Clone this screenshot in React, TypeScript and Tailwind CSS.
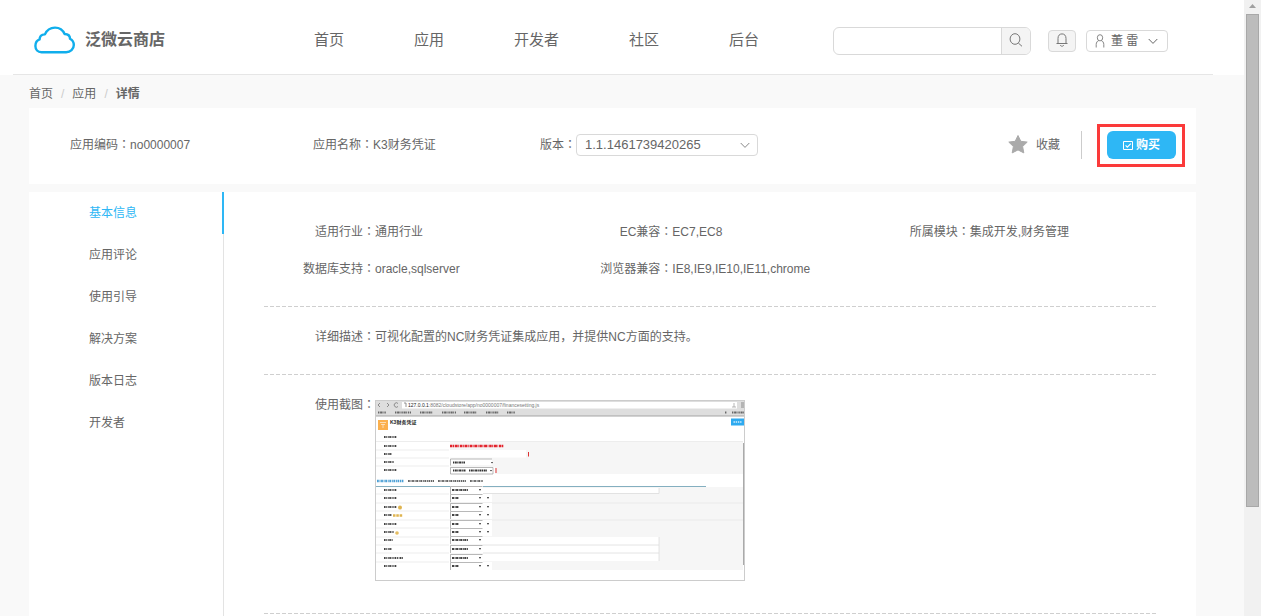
import type { ReactNode } from "react";

const navItems = ["首页", "应用", "开发者", "社区", "后台"];
const sideItems = ["基本信息", "应用评论", "使用引导", "解决方案", "版本日志", "开发者"];

function Chevron() {
  return (
    <svg width="10" height="7" viewBox="0 0 10 7" fill="none" stroke="currentColor" aria-hidden="true">
      <path d="M0.7 1 5 5.4 9.3 1" />
    </svg>
  );
}

function Colon() {
  return <span className="leading-none font-['Noto_Sans_CJK_TC',sans-serif]">：</span>;
}

function Field({ label, children }: { label: string; children: ReactNode }) {
  return (
    <div className="flex leading-[37px]">
      <span className="w-[111px] shrink-0 text-right whitespace-nowrap">
        {label}
        <Colon />
      </span>
      <div className="whitespace-nowrap">{children}</div>
    </div>
  );
}

function DashedLine() {
  return (
    <div className="h-px bg-[repeating-linear-gradient(90deg,#cfcfcf_0,#cfcfcf_4px,#fff_4px,#fff_6px)]" />
  );
}

function Header() {
  return (
    <header className="bg-white">
      <div className="ml-[13px] mr-[31px] h-[75px] flex items-center border-b border-[#e6e6e6] pl-5 pr-[45px] pt-2">
        <a href="#" className="flex items-center gap-[9px] shrink-0 pb-0.5 text-base font-bold text-[#666]">
          <svg width="43" height="30" viewBox="0 0 43 30" fill="none" stroke="#10aeec" strokeWidth="2.4" aria-hidden="true">
            <path
              strokeLinejoin="round"
              d="M8.5 27.2C4.8 27.2 2.4 24.6 2.4 21C2.4 17.6 4.4 15.2 6.6 14.4C6.6 11.4 8.8 9.6 11.9 9.4C13.6 5.4 17.6 2.6 22 2.6C26.6 2.6 30 5.2 31.6 9C35 9 37 11 37 13.8C39.4 15 40.8 17.3 40.8 20.1C40.8 24.3 37.4 27.2 33.2 27.2Z"
            />
          </svg>
          泛微云商店
        </a>
        <nav className="flex gap-[70px] ml-[149px] shrink-0 pb-0.5 text-[15px] text-[#666]">
          {navItems.map((item) => (
            <a key={item} href="#">
              {item}
            </a>
          ))}
        </nav>
        <div className="flex items-center ml-auto text-[#777]">
          <form className="flex h-7 w-[198px] border border-[#d9d9d9] rounded-md overflow-hidden">
            <input type="text" aria-label="搜索" className="flex-1 min-w-0 px-2 text-xs outline-none" />
            <button type="button" aria-label="搜索" className="w-[29px] bg-[#f4f4f4] border-l border-[#d9d9d9] flex justify-center pt-[5px]">
              <svg width="14" height="14" viewBox="0 0 14 14" fill="none" stroke="currentColor" aria-hidden="true">
                <ellipse cx="6" cy="6" rx="4.9" ry="5.3" />
                <path d="M9.3 10 13 13.3" />
              </svg>
            </button>
          </form>
          <button
            type="button"
            aria-label="消息"
            className="ml-[17px] w-7 h-[22px] bg-[#f4f4f4] border border-[#d9d9d9] rounded flex justify-center pt-[2px]"
          >
            <svg width="12" height="14" viewBox="0 0 12 14" fill="none" stroke="currentColor" aria-hidden="true">
              <path d="M0.5 10.5H11.5M2 10.5V5.5C2 2.6 3.5 0.9 6 0.9C8.5 0.9 10 2.6 10 5.5V10.5M4.2 12C4.6 12.9 5.2 13.2 6 13.2C6.8 13.2 7.4 12.9 7.8 12" />
            </svg>
          </button>
          <button
            type="button"
            className="ml-[10px] w-[82px] h-[22px] border border-[#d9d9d9] rounded flex items-center pl-2 text-xs text-[#666]"
          >
            <svg width="10" height="14" viewBox="0 0 10 14" fill="none" stroke="#888" aria-hidden="true">
              <ellipse cx="5" cy="3.8" rx="2.7" ry="3.1" />
              <path d="M1.2 13.5V10.5C1.2 8.4 2.4 7 3.8 6.5M8.8 13.5V10.5C8.8 8.4 7.6 7 6.2 6.5" />
            </svg>
            <span className="ml-[6px] mr-[10px]">董 雷</span>
            <Chevron />
          </button>
        </div>
      </div>
    </header>
  );
}

function Summary() {
  return (
    <section className="bg-white h-[76px] flex items-center pl-[41px] pr-[11px] pb-0.5">
      <div className="w-[243px] shrink-0">
        应用编码
        <Colon />
        no0000007
      </div>
      <div className="w-[227px] shrink-0">
        应用名称
        <Colon />
        K3财务凭证
      </div>
      <label htmlFor="version" className="shrink-0">
        版本
        <Colon />
      </label>
      <div className="relative w-[182px] text-[#888]">
        <select
          id="version"
          className="w-full h-[22px] appearance-none border border-[#d9d9d9] rounded bg-white pl-2 text-[13px] leading-5 text-[#666]"
        >
          <option>1.1.1461739420265</option>
        </select>
        <span className="absolute right-2 top-2 pointer-events-none">
          <Chevron />
        </span>
      </div>
      <div className="ml-auto flex items-center">
        <button type="button" className="flex items-center gap-2">
          <svg width="20" height="20" viewBox="0 0 20 20" fill="#aaa" stroke="#aaa" strokeLinejoin="round" aria-hidden="true">
            <path d="M10 0.5 12.8 6.3 19.2 7.1 14.6 11.5 15.8 17.9 10 14.9 4.2 17.9 5.4 11.5 0.8 7.1 7.2 6.3Z" />
          </svg>
          收藏
        </button>
        <div className="w-px h-7 bg-[#ccc] ml-[21px] mr-[15px]" />
        <div className="border-3 border-[#fb3a3a] pt-1 pb-[5px] pl-[7px] pr-[6px]">
          <button
            type="button"
            className="w-[69px] h-7 rounded-md bg-[#2eb7f5] text-white font-bold flex items-center justify-center gap-[3px]"
          >
            <svg width="10" height="10" viewBox="0 0 10 10" fill="none" stroke="#fff" aria-hidden="true">
              <path d="M0.5 1.5H9.5V9.5H0.5Z" />
              <path strokeWidth="1.2" d="M2.6 5.4 4.3 7.1 7.8 3.6" />
            </svg>
            购买
          </button>
        </div>
      </div>
    </section>
  );
}

const previewLabels = [
  [37, 13], [46, 13], [54, 8], [62, 10], [70, 13], [90, 13], [98, 13], [107, 13],
  [115, 8], [124, 13], [132, 10], [140, 9], [149, 8], [158, 19], [166, 13],
];

const previewSelects = [
  { y: 90, w: 33, text: 16 },
  { y: 98, w: 42, text: 7 },
  { y: 107, w: 42, text: 7 },
  { y: 115, w: 42, text: 7 },
  { y: 124, w: 42, text: 7 },
  { y: 132, w: 42, text: 7 },
  { y: 140, w: 33, text: 16 },
  { y: 149, w: 33, text: 16 },
  { y: 158, w: 33, text: 16 },
  { y: 166, w: 42, text: 7 },
];

function Preview() {
  return (
    <svg
      width="370"
      height="181"
      viewBox="0 0 370 181"
      role="img"
      aria-label="使用截图"
      className="font-['Liberation_Sans','Noto_Sans_CJK_SC',sans-serif]"
    >
      <rect width="370" height="181" fill="#fff" />
      {/* browser bar */}
      <path d="M0 1H370V16H0Z" fill="#dedede" />
      <path d="M27 2H362V8.5H27Z" fill="#fff" />
      <path d="M0 16H370" stroke="#a5a5a5" />
      <path
        d="M5 3 3 5 5 7M12 3 14 5 12 7M23 3.5A2.2 2.2 0 1 0 23 6.5M29 3H31V7M366 3H370M366 5H370M366 7H370"
        stroke="#777"
        fill="none"
        strokeWidth="0.8"
      />
      <path d="M359 3V7M357 7H361" stroke="#999" strokeWidth="0.7" />
      <text x="33" y="7" fontSize="5" fill="#777">
        <tspan fill="#222">127.0.0.1</tspan>:8082/cloudstore/app/no0000007/financesetting.js
      </text>
      <path
        d="M3 12.5H11M20 12.5H36M45 12.5H58M67 12.5H81M89 12.5H102M111 12.5H124M132 12.5H140M350 12.5H352M357 12.5H369"
        stroke="#666"
        strokeWidth="1.9"
        strokeDasharray="1.4 0.7 2.2 0.4 0.8 0.9"
      />
      {/* title */}
      <rect x="3" y="20" width="10" height="10" fill="#fbb04c" />
      <path d="M5 22.5H11M6 24.5H10M8 24V28" stroke="#fff" strokeWidth="0.8" opacity="0.7" />
      <text x="15" y="24" fontSize="5" fontWeight="bold" fill="#222">K3财务凭证</text>
      <rect x="356" y="18.5" width="13" height="7" fill="#2eaaf0" />
      <path d="M358.5 22H367" stroke="#fff" strokeWidth="1.4" strokeDasharray="1.4 0.8" opacity="0.8" />
      {/* form */}
      <path d="M75 42H368V74H75ZM75 87H368V170H75Z" fill="#f6f6f6" />
      <path
        d="M1 41.5H368M1 50H74M1 58H74M1 66H74M1 94H74M1 103H368M1 111H74M1 120H368M1 128H74M1 137H74M1 145H74M1 153H74M1 162H74"
        stroke="#e9e9e9"
        strokeWidth="0.8"
      />
      <path d="M75 50H151V57.5H75Z" fill="#fff" />
      <path d="M75 46H129" stroke="#e3222b" strokeWidth="2.4" strokeDasharray="2.5 0.5 1 0.7 3 0.6 0.7 0.8" />
      <path d="M153.5 52V56.5M121 68V73" stroke="#d33" />
      {previewLabels.map(([y, w]) => (
        <path key={y} d={`M9 ${y}h${w}`} stroke="#444" strokeWidth="2.1" strokeDasharray="1.6 0.7 1 0.8 0.7 0.5" />
      ))}
      <path d="M75 58.5H117V65H75ZM75 67H120V74H75Z" fill="#fff" />
      <path d="M75.5 65.5V59H117M75.5 74V67.5H118V74Z" stroke="#999" strokeWidth="0.7" fill="none" />
      <path d="M78 62.5H90M78 70.5H91M94 70.5H112" stroke="#333" strokeWidth="1.8" strokeDasharray="1.2 0.6 2 0.5" />
      <path d="M116 62h2l-1 1.5zM115 70h2l-1 1.5z" fill="#222" />
      <path d="M2 81H29" stroke="#4b9fd5" strokeWidth="2.4" strokeDasharray="1.8 0.7 1 0.6" />
      <path d="M33 81H59M63 81H91M95 81H108" stroke="#666" strokeWidth="2.2" strokeDasharray="1.8 0.7 1 0.6" />
      <path d="M1 86.5H331" stroke="#84afc0" />
      <path d="M108 88H284V93H108ZM108 137H284V161H108Z" fill="#fff" />
      <path d="M108 93.5H284V88M108 145H284M108 153H284M284 137V161" stroke="#ddd" strokeWidth="0.8" fill="none" />
      {previewSelects.map(({ y, w, text }) => (
        <g key={y}>
          <path d={`M75 ${y - 4}h${w}v8h-${w}z`} fill="#fff" />
          <path d={`M75.5 ${y + 4}v-7.5h32`} stroke="#999" strokeWidth="0.7" fill="none" />
          <path d={`M77 ${y}h${text}`} stroke="#444" strokeWidth="2" strokeDasharray="2 0.6 1 0.5" />
          <path d={`M104 ${y - 1}h2l-1 2z`} fill="#222" />
          {w > 33 && <path d={`M112 ${y - 1}h2l-1 2z`} fill="#222" />}
        </g>
      ))}
      <circle cx="25" cy="107.5" r="2" fill="#dfb44f" />
      <path d="M18 115.500H28" stroke="#dfb44f" strokeWidth="2.6" strokeDasharray="2.5 0.8" />
      <circle cx="22" cy="133" r="1.8" fill="#e5bd61" />
      <path d="M368.5 43V165" stroke="#aaa" />
      <rect x="0.5" y="0.5" width="369" height="180" fill="none" stroke="#ccc" />
    </svg>
  );
}

function Details() {
  return (
    <section className="bg-white flex flex-1 mt-2">
      <nav className="w-[195px] shrink-0 border-r border-[#e3e3e3]">
        {sideItems.map((item, i) => (
          <a
            key={item}
            href="#"
            className={
              i === 0
                ? "block h-[42px] leading-[42px] pl-[60px] -mr-px border-r-2 border-[#2eb7f5] text-[#2eb7f5]"
                : "block h-[42px] leading-[42px] pl-[60px]"
            }
          >
            {item}
          </a>
        ))}
      </nav>
      <div className="flex-1 min-w-0 mx-10">
        <div className="grid grid-cols-3 pt-[22px] pb-[18px]">
          <Field label="适用行业">通用行业</Field>
          <Field label="EC兼容">EC7,EC8</Field>
          <Field label="所属模块">集成开发,财务管理</Field>
          <Field label="数据库支持">oracle,sqlserver</Field>
          <Field label="浏览器兼容">IE8,IE9,IE10,IE11,chrome</Field>
        </div>
        <DashedLine />
        <div className="pt-3 pb-[18px]">
          <Field label="详细描述">可视化配置的NC财务凭证集成应用，并提供NC方面的支持。</Field>
        </div>
        <DashedLine />
        <div className="pt-3 pb-8">
          <Field label="使用截图">
            <div className="pt-[13px]">
              <Preview />
            </div>
          </Field>
        </div>
        <DashedLine />
      </div>
    </section>
  );
}

function ScrollTrack() {
  return (
    <div className="w-[17px] shrink-0 bg-[#f1f1f1] flex flex-col items-center" aria-hidden="true">
      <svg width="17" height="14" viewBox="0 0 17 14" className="shrink-0">
        <path d="M5 8 8.5 4 12 8Z" fill="#a0a0a0" />
      </svg>
      <div className="w-[13px] h-4/5 bg-[#bcbcbc] border border-[#a8a8a8]" />
    </div>
  );
}

export default function App() {
  return (
    <div className="flex h-screen overflow-hidden bg-[#f9f9f9] text-xs text-[#666] font-['Liberation_Sans','Noto_Sans_CJK_SC',sans-serif]">
      <div className="flex-1 min-w-0 flex flex-col">
        <Header />
        <main className="flex-1 flex flex-col ml-[29px] mr-12">
          <div className="h-[33px] shrink-0 flex items-center gap-2 pt-1">
            <a href="#">首页</a>
            <span className="text-[#ccc]">/</span>
            <a href="#">应用</a>
            <span className="text-[#ccc]">/</span>
            <strong>详情</strong>
          </div>
          <Summary />
          <Details />
        </main>
      </div>
      <ScrollTrack />
    </div>
  );
}
